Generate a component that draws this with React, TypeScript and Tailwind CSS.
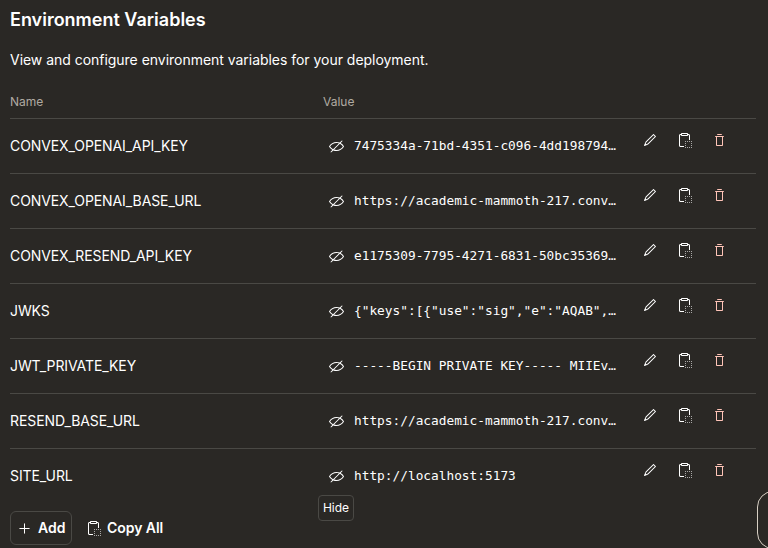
import React from "react";
import { RxClipboardCopy, RxEyeNone, RxPencil1, RxPlus, RxTrash } from "react-icons/rx";

const variables = [
  { name: "CONVEX_OPENAI_API_KEY", value: "7475334a-71bd-4351-c096-4dd198794…" },
  { name: "CONVEX_OPENAI_BASE_URL", value: "https://academic-mammoth-217.conv…" },
  { name: "CONVEX_RESEND_API_KEY", value: "e1175309-7795-4271-6831-50bc35369…" },
  { name: "JWKS", value: '{"keys":[{"use":"sig","e":"AQAB",…' },
  { name: "JWT_PRIVATE_KEY", value: "-----BEGIN PRIVATE KEY----- MIIEv…" },
  { name: "RESEND_BASE_URL", value: "https://academic-mammoth-217.conv…" },
  { name: "SITE_URL", value: "http://localhost:5173" },
];

function VariableRow({ name, value }: { name: string; value: string }) {
  return (
    <div className="flex h-[55px] border-t border-[#4a4945]">
      <div className="w-[313px] pt-[17px] text-sm leading-5 tracking-[-0.09px]">{name}</div>
      <div className="flex w-[319px] items-start pl-1.5 pt-[17px]">
        <button aria-label="Hide" className="mr-[10px] mt-[3px]">
          <RxEyeNone size={15} />
        </button>
        <span className="whitespace-pre font-['DejaVu_Sans_Mono',monospace] text-[12.8px] leading-5">
          {value}
        </span>
      </div>
      <div className="flex items-start gap-5 pt-[14px]">
        <button aria-label="Edit"><RxPencil1 size={15} /></button>
        <button aria-label="Copy"><RxClipboardCopy size={15} /></button>
        <button aria-label="Delete" className="text-[#ffc4b8]"><RxTrash size={15} /></button>
      </div>
    </div>
  );
}

export default function App() {
  return (
    <main className="relative h-[548px] w-[768px] overflow-hidden bg-[#2a2825] pl-[10px] pr-3 pt-2 font-[Inter,sans-serif] text-white">
      <h1 className="text-lg font-semibold leading-6">Environment Variables</h1>
      <p className="mt-[18px] text-sm leading-5 tracking-[-0.03px]">View and configure environment variables for your deployment.</p>
      <div className="mt-6 flex h-6 text-xs leading-4 text-[#b0aaa2]">
        <span className="w-[313px]">Name</span>
        <span>Value</span>
      </div>
      <section>
        {variables.map((v) => <VariableRow key={v.name} {...v} />)}
      </section>
      <div className="mt-2 flex items-center">
        <button className="flex h-[34px] w-[62px] items-center gap-[6px] rounded-md border border-[#4a4945] pl-[6px] text-sm font-semibold">
          <RxPlus size={15} />
          Add
        </button>
        <button className="ml-[14px] flex items-center gap-[6px] text-sm font-semibold tracking-[-0.05px]">
          <RxClipboardCopy size={15} />
          Copy All
        </button>
      </div>
      <div className="absolute left-[318px] top-[495px] flex h-[26px] w-9 items-center justify-center rounded border border-[#4a4945] bg-[#2a2825] text-xs">
        Hide
      </div>
      <div className="absolute left-[757px] top-[491px] h-[58px] w-16 rounded-2xl border border-[#d7cfc4]" />
    </main>
  );
}
